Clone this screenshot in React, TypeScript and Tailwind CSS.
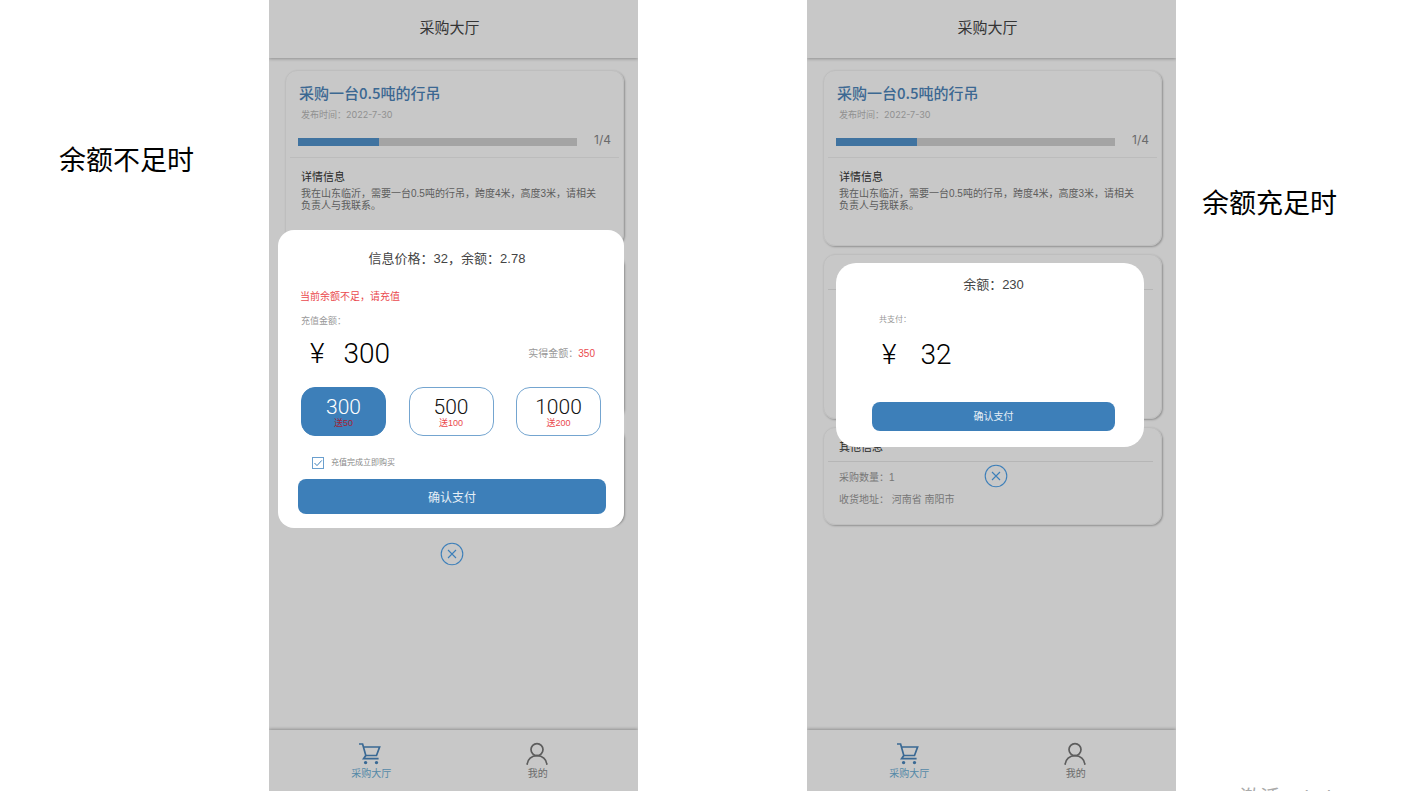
import type { ReactNode } from "react";

const packages = [
  { amount: "300", bonus: "送50", selected: true },
  { amount: "500", bonus: "送100", selected: false },
  { amount: "1000", bonus: "送200", selected: false },
];

const progress = 29;

function CartIcon() {
  return (
    <svg
      viewBox="0 0 24 24"
      className="h-6 w-6"
      fill="none"
      stroke="currentColor"
      strokeWidth="1.7"
      aria-hidden
    >
      <path d="M1 2h3.600l3.200 11.500h10.700L21.600 5H5.400" />
      <path d="M7.800 13.500l-2.200 3.200h15" />
      <circle cx="7.600" cy="20.600" r="1.700" fill="currentColor" stroke="none" />
      <circle cx="18.500" cy="20.600" r="1.700" fill="currentColor" stroke="none" />
    </svg>
  );
}

function UserIcon() {
  return (
    <svg
      viewBox="0 0 24 24"
      className="h-6 w-6"
      fill="none"
      stroke="currentColor"
      strokeWidth="1.7"
      strokeLinecap="round"
      aria-hidden
    >
      <circle cx="12" cy="7.600" r="6" />
      <path d="M2.200 22.200c.3-5 4.300-8.600 9.800-8.600s9.500 3.600 9.800 8.600" />
    </svg>
  );
}

function CloseButton() {
  return (
    <button type="button" aria-label="关闭" className="text-[#3d7fb9]">
      <svg
        viewBox="0 0 24 24"
        className="h-6 w-6"
        fill="none"
        stroke="currentColor"
        strokeWidth="1.1"
      >
        <circle cx="12" cy="12" r="10.800" />
        <path d="M8 8l8 8M16 8l-8 8" />
      </svg>
    </button>
  );
}

function Card({ children, className }: { children?: ReactNode; className: string }) {
  return (
    <section
      className={`rounded-xl border border-[#f2f2f2] shadow-[1px_1px_2px_rgba(0,0,0,0.28)] ${className}`}
    >
      {children}
    </section>
  );
}

function Phone({ children }: { children: ReactNode }) {
  return (
    <div className="relative flex min-h-screen flex-col overflow-hidden bg-white">
      <header className="flex h-[58px] items-center justify-center pr-2 pb-[2px] shadow-[0_1px_3px_rgba(0,0,0,0.28)]">
        <h1 className="text-[15px] text-[#444]">采购大厅</h1>
      </header>

      <main className="flex flex-1 flex-col gap-2 pt-3 pr-[14px] pl-4">
        <Card className="h-[176px]">
          <div className="px-3 pt-[11px]">
            <h2 className="pl-[1px] font-['Noto_Sans_CJK_SC',sans-serif] text-[15px] leading-[22px] font-medium text-[#4d85ba]">
              采购一台0.5吨的行吊
            </h2>
            <p className="pl-[3px] font-[Inter,'Noto_Sans_CJK_SC',sans-serif] text-[9px] leading-[22px] text-[#b8b8b8]">
              发布时间：2022-7-30
            </p>
            <div className="mt-1 flex items-center gap-[14px]">
              <div className="mt-1 h-2 flex-1 bg-[#d2d2d2]">
                <div className="h-full bg-[#5293cc]" style={{ width: `${progress}%` }} />
              </div>
              <span className="w-5 text-right font-[Inter,sans-serif] text-[12px] leading-5 text-[#888]">
                1/4
              </span>
            </div>
          </div>
          <hr className="mx-1 mt-[7px] border-[#f0f0f0]" />
          <div className="pt-[10px] pr-6 pl-[15px]">
            <h3 className="text-[11px] leading-[18px] text-[#333]">详情信息</h3>
            <p className="pt-[2px] text-[10px] leading-3 text-[#777]">
              我在山东临沂，需要一台0.5吨的行吊，跨度4米，高度3米，请相关负责人与我联系。
            </p>
          </div>
        </Card>

        <Card className="h-[165px]">
          <hr className="mr-2 ml-1 mt-[34px] border-[#e8e8e8]" />
        </Card>

        <Card className="h-[98px]">
          <h3 className="pt-[10px] pl-[15px] text-[11px] leading-[18px] text-[#333]">
            其他信息
          </h3>
          <hr className="mt-[5px] mr-2 ml-1 border-[#e8e8e8]" />
          <div className="pt-[5px] pl-[15px] text-[10px] leading-[22px] text-[#999]">
            <p>采购数量：1</p>
            <p>收货地址： 河南省 南阳市</p>
          </div>
        </Card>
      </main>

      <nav className="grid h-[61px] grid-cols-2 px-[18px] pt-3 shadow-[0_-1px_3px_rgba(0,0,0,0.28)]">
        <a href="#hall" className="flex flex-col items-center text-[#4a86bd]">
          <CartIcon />
          <span className="pl-[2px] text-[10px] leading-4 text-[#6cafd6]">采购大厅</span>
        </a>
        <a href="#mine" className="flex flex-col items-center text-[#777]">
          <UserIcon />
          <span className="pl-[2px] text-[10px] leading-4 text-[#8a8a8a]">我的</span>
        </a>
      </nav>

      {children}
    </div>
  );
}

function RechargeDialog() {
  return (
    <div className="absolute inset-0 bg-black/[0.216] pt-[230px] pr-[14px] pl-[9px]">
      <div role="dialog" className="rounded-2xl bg-white pr-[18px] pb-[14px] pl-5">
        <h2 className="pt-[19px] pr-[10px] text-center text-[13px] leading-5 text-[#444]">
          信息价格：32，余额：2.78
        </h2>
        <p className="pt-5 pl-[2px] text-[10px] leading-4 text-[#ea4a4e]">
          当前余额不足，请充值
        </p>
        <p className="pt-2 pl-[3px] text-[9px] leading-4 text-[#999]">充值金额：</p>
        <div className="flex items-center justify-between pt-2 pr-[11px] pl-3">
          <p className="flex gap-[19px] font-[Roboto,sans-serif] text-[28px] leading-[34px] font-light text-black">
            <span>¥</span>
            <span>300</span>
          </p>
          <p className="text-[10px] leading-4 text-[#999]">
            实得金额：<span className="text-[#ea4a4e]">350</span>
          </p>
        </div>
        <div className="flex justify-between pt-4 pr-[5px] pl-[3px]">
          {packages.map((item) => (
            <button
              key={item.amount}
              type="button"
              aria-pressed={item.selected}
              className={`flex h-[49px] w-[85px] flex-col items-center justify-center rounded-[14px] border pt-[2px] ${
                item.selected
                  ? "border-[#3d7fb9] bg-[#3d7fb9] text-white"
                  : "border-[#74a5d0] bg-white text-[#111]"
              }`}
            >
              <span className="font-[Roboto,sans-serif] text-[21px] leading-[21px] font-light">
                {item.amount}
              </span>
              <span
                className={`text-[9px] leading-[11px] ${
                  item.selected ? "text-[#a12335]" : "text-[#ea4a4e]"
                }`}
              >
                {item.bonus}
              </span>
            </button>
          ))}
        </div>
        <label className="flex items-center gap-[7px] pt-[21px] pl-[14px] text-[8px] leading-3 text-[#888]">
          <span className="relative h-3 w-3">
            <input
              type="checkbox"
              defaultChecked
              className="peer block h-3 w-3 appearance-none border border-[#6a9fce]"
            />
            <svg
              viewBox="0 0 12 12"
              className="pointer-events-none absolute inset-0 hidden h-3 w-3 peer-checked:block"
              fill="none"
              stroke="#3d7fb9"
              aria-hidden
            >
              <path d="M2.500 6l2.500 2.600L9.800 3.400" />
            </svg>
          </span>
          充值完成立即购买
        </label>
        <button
          type="button"
          className="mt-[10px] block h-[35px] w-full rounded-lg bg-[#3d7fb9] pt-[2px] text-[12px] text-[#e6eff7]"
        >
          确认支付
        </button>
      </div>
      <div className="flex justify-center pt-[14px] pl-[2px]">
        <CloseButton />
      </div>
    </div>
  );
}

function PayDialog() {
  return (
    <div className="absolute inset-0 bg-black/[0.216] pt-[263px] pr-8 pl-[29px]">
      <div role="dialog" className="rounded-[20px] bg-white pr-[29px] pb-4 pl-9">
        <h2 className="pt-3 text-center text-[13px] leading-5 text-[#444]">余额：230</h2>
        <p className="pt-[17px] pl-[7px] text-[8px] leading-4 text-[#999]">共支付：</p>
        <p className="flex gap-[24px] pt-[10px] pl-[10px] font-[Roboto,sans-serif] text-[28px] leading-[34px] font-light text-black">
          <span>¥</span>
          <span>32</span>
        </p>
        <button
          type="button"
          className="mt-[30px] block h-[29px] w-full rounded-lg bg-[#3d7fb9] text-[10px] text-[#e6eff7]"
        >
          确认支付
        </button>
      </div>
      <div className="flex justify-center pt-[17px] pl-3">
        <CloseButton />
      </div>
    </div>
  );
}

export default function App() {
  return (
    <div
      lang="zh-CN"
      className="relative grid min-h-screen grid-cols-[269fr_369fr_169fr_369fr_237fr] bg-white font-['Liberation_Sans','Noto_Sans_CJK_SC',sans-serif]"
    >
      <p className="pt-[141px] pl-[59px] text-[27px] leading-10 text-black">余额不足时</p>
      <Phone>
        <RechargeDialog />
      </Phone>
      <div />
      <Phone>
        <PayDialog />
      </Phone>
      <p className="pt-[184px] pl-[26px] text-[27px] leading-10 text-black">余额充足时</p>

      {/* system notice cut off by the bottom edge */}
      <div className="absolute right-0 bottom-0 h-[5px] w-[173px] overflow-hidden text-[20px] leading-6 text-[#aaa]">
        激活 Windows
      </div>
    </div>
  );
}
